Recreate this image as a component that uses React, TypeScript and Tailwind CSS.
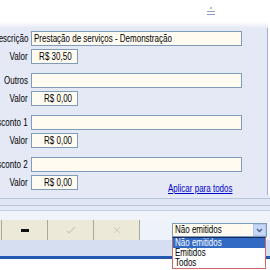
import { useState } from 'react'

const font = { fontFamily: '"Liberation Sans", Arial, sans-serif' }

// the reference uses a narrow UI font; Liberation Sans squeezed horizontally
function T({ children, right = false, className = '' }: { children: React.ReactNode; right?: boolean; className?: string }) {
  return (
    <span className={`inline-block whitespace-nowrap scale-x-[0.8] ${right ? 'origin-right' : 'origin-left'} ${className}`}>
      {children}
    </span>
  )
}

function Label({ text }: { text: string }) {
  return (
    <div className="w-[29px] shrink-0 overflow-hidden flex justify-end pr-[1px] text-[10px] text-black">
      <T right>{text}</T>
    </div>
  )
}

function Field({ label, value, small = false }: { label: string; value: string; small?: boolean }) {
  return (
    <div className="flex items-center gap-[2px] h-[15px]">
      <Label text={label} />
      <div
        className={`h-[15px] border border-[#7f9db9] bg-[#fffbf0] text-[10px] leading-[13px] text-black overflow-hidden flex ${
          small ? 'w-[47px] pr-[5px] justify-end' : 'w-[211px] pl-[2px]'
        }`}
      >
        {value && <T right={small}>{value}</T>}
      </div>
    </div>
  )
}

function Group({ label, value, amount }: { label: string; value: string; amount: string }) {
  return (
    <div className="flex flex-col gap-[3px]">
      <Field label={label} value={value} />
      <Field label="Valor" value={amount} small />
    </div>
  )
}

export default function App() {
  const [open] = useState(true)
  const options = ['Não emitidos', 'Emitidos', 'Todos']

  return (
    <div className="relative w-[270px] h-[270px] overflow-hidden bg-white" style={font}>
      {/* top header strip */}
      <div className="relative h-[22px] bg-white">
        <div className="absolute left-[207px] top-[7px] flex flex-col items-center gap-[2px]">
          <div className="w-[2px] h-[2px] bg-[#b5c2dc]" />
          <div className="w-[8px] h-[1px] bg-[#8ea2c8]" />
          <div className="w-[8px] h-[1px] bg-[#8ea2c8]" />
        </div>
      </div>
      <div className="h-[6px] w-[268px] bg-gradient-to-b from-white to-[#e5e9f5]" />

      {/* main panel */}
      <div className="w-[268px] h-[167px] bg-[#e5e9f5] border-r border-[#9fb0d0] pt-[3px] flex flex-col gap-[9px] relative">
        <Group label="Descrição" value="Prestação de serviços - Demonstração" amount="R$ 30,50" />
        <Group label="Outros" value="" amount="R$ 0,00" />
        <Group label="Desconto 1" value="" amount="R$ 0,00" />
        <Group label="Desconto 2" value="" amount="R$ 0,00" />
        <span className="absolute left-[168px] top-[153px] text-[10px] text-[#0000cc] underline">
          <T className="underline">Aplicar para todos</T>
        </span>
      </div>

      {/* separator bands */}
      <div className="h-[3px] bg-[#e5e9f5]" />
      <div className="h-[1px] bg-[#b9c6de]" />
      <div className="h-[6px] bg-[#dfe5f3]" />
      <div className="h-[1px] bg-[#b9c6de]" />
      <div className="h-[4px] bg-[#e3e8f4]" />
      <div className="h-[1px] bg-[#c6d0e4]" />
      <div className="h-[9px] bg-[#f0f3fa]" />

      {/* toolbar */}
      <div className="h-[20px] flex items-stretch bg-[#eef2fa]">
        <div className="w-[2px] bg-[#ece9d8] border-r border-[#aca899]" />
        <div className="w-[46px] bg-[#ece9d8] border-r border-[#aca899] flex items-center justify-center">
          <div className="w-[8px] h-[3px] bg-[#111]" />
        </div>
        <div className="w-[46px] bg-[#ece9d8] border-r border-[#aca899] flex items-center justify-center">
          <svg width="10" height="8" viewBox="0 0 10 8">
            <path d="M1 5 L3 7 L9 1" stroke="#cfccbd" strokeWidth="1.2" fill="none" />
          </svg>
        </div>
        <div className="w-[46px] bg-[#ece9d8] border-r border-[#aca899] flex items-center justify-center">
          <svg width="8" height="8" viewBox="0 0 8 8">
            <path d="M1 1 L7 7 M7 1 L1 7" stroke="#cfccbd" strokeWidth="1" fill="none" />
          </svg>
        </div>
        <div className="flex-1" />
        <div className="self-center mr-[3px] w-[95px] h-[14px] border border-[#7f9db9] bg-[#fffbf0] flex items-center">
          <span className="flex-1 pl-[2px] text-[10px] leading-[12px] text-black">
            <T>Não emitidos</T>
          </span>
          <div className="w-[13px] h-[12px] bg-[#c7d7f9] border border-[#b0c6f0] flex items-center justify-center">
            <svg width="7" height="5" viewBox="0 0 7 5">
              <path d="M1 1 L3.5 3.5 L6 1" stroke="#4d6185" strokeWidth="1.4" fill="none" />
            </svg>
          </div>
        </div>
      </div>

      {/* bottom bands */}
      <div className="h-[16px] bg-[#d6dff2]" />
      <div className="h-[3px] bg-[#2258b0]" />

      {/* open dropdown list */}
      {open && (
        <div className="absolute left-[172px] top-[237px] w-[94px] border border-[#d06a6a] border-t-[#1a2a60] bg-white flex flex-col">
          {options.map((o, i) => (
            <div
              key={o}
              className={`h-[10px] text-[10px] leading-[10px] pl-[2px] ${
                i === 0 ? 'bg-[#316ac5] text-white' : 'text-black'
              }`}
            >
              <T>{o}</T>
            </div>
          ))}
        </div>
      )}
    </div>
  )
}
